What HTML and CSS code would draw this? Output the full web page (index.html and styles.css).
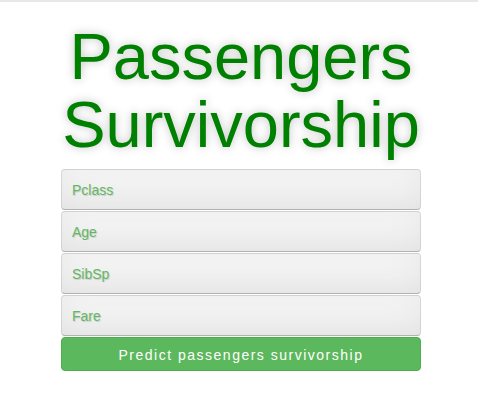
FILE: index.html
```html
<!DOCTYPE html>
<html>
<head>
<meta charset="utf-8">
<link rel="stylesheet" href="styles.css">
</head>
<body>
<div class="topline"></div>
<div class="login">
  <h1 class="title">Passengers Survivorship</h1>
  <form class="form">
    <input class="field" type="text" placeholder="Pclass">
    <input class="field" type="text" placeholder="Age">
    <input class="field" type="text" placeholder="SibSp">
    <input class="field" type="text" placeholder="Fare">
    <button class="btn" type="button">Predict passengers survivorship</button>
  </form>
</div>
</body>
</html>
```
FILE: styles.css
```css
html, body {
  margin: 0;
  padding: 0;
  background: #fff;
  font-family: "Liberation Sans", Arial, sans-serif;
}
.topline {
  height: 2px;
  background: #e8e8e8;
}
.login {
  width: 360px;
  margin: 0 auto;
  padding-left: 4px;
  display: flex;
  flex-direction: column;
}
.title {
  margin: 21px -10px 10px;
  font-weight: normal;
  font-size: 65px;
  line-height: 68px;
  color: #008000;
  text-align: center;
  text-shadow: 0 0 10px rgba(0,0,0,0.25);
}
.form {
  display: flex;
  flex-direction: column;
  gap: 1px;
}
.field {
  box-sizing: border-box;
  width: 360px;
  height: 41px;
  margin: 0;
  padding: 0 10px;
  font-family: "Liberation Sans", Arial, sans-serif;
  font-size: 14px;
  color: #5cb85c;
  text-shadow: 1px 1px 1px rgba(0,0,0,0.15);
  border: 1px solid rgba(0,0,0,0.12);
  border-bottom-color: rgba(0,0,0,0.28);
  border-radius: 4px;
  background: linear-gradient(to bottom, #f6f6f6, #efefef);
  box-shadow: inset 0 -5px 30px rgba(100,100,100,0.08);
  outline: none;
}
.field::placeholder {
  color: #62b862;
  opacity: 1;
}
.btn {
  box-sizing: border-box;
  width: 360px;
  height: 34px;
  margin: 0;
  padding-top: 2px;
  border: 1px solid #4cae4c;
  border-radius: 4px;
  background: #5cb85c;
  color: #fff;
  font-family: "Liberation Sans", Arial, sans-serif;
  font-size: 14px;
  letter-spacing: 1.5px;
  cursor: pointer;
}
```
